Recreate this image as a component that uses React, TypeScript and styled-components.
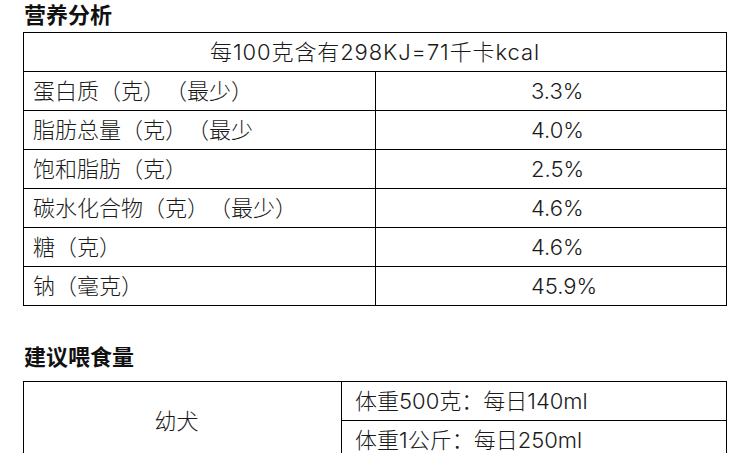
import React from "react";
import styled, { createGlobalStyle } from "styled-components";

const Global = createGlobalStyle`
  html, body { margin: 0; padding: 0; background: #fff; }
  body {
    font-family: "Noto Sans CJK SC", "Noto Sans", sans-serif;
    text-spacing-trim: space-all;
  }
`;

const Page = styled.div`
  padding: 1px 24px 0 23px;
  width: 704px;
`;

const Heading = styled.h2<{ $top?: number }>`
  margin: ${(p) => p.$top ?? 0}px 0 0 1px;
  font-size: 22px;
  line-height: 24px;
  font-weight: 700;
  color: #111;
  text-spacing-trim: space-all;
`;

const Table = styled.table<{ $top: number }>`
  margin-top: ${(p) => p.$top}px;
  width: 704px;
  border-collapse: collapse;
  table-layout: fixed;
  font-family: "Inter", "Noto Sans CJK SC", sans-serif;
  font-weight: 300;
  font-size: 22px;
  color: #1a1a1a;
  text-spacing-trim: space-all;
`;

const Td = styled.td<{
  $align?: "left" | "center";
  $pad?: number;
  $padRight?: number;
  $spacing?: number;
}>`
  border: 1px solid #000;
  height: 38px;
  padding: 0 ${(p) => p.$padRight ?? 0}px 0 ${(p) => p.$pad ?? 0}px;
  text-align: ${(p) => p.$align ?? "left"};
  letter-spacing: ${(p) => p.$spacing ?? 0}px;
  line-height: 38px;
  white-space: nowrap;
  overflow: hidden;
  text-spacing-trim: space-all;
`;

const nutrients: [string, string][] = [
  ["蛋白质（克）（最少）", "3.3%"],
  ["脂肪总量（克）（最少", "4.0%"],
  ["饱和脂肪（克）", "2.5%"],
  ["碳水化合物（克）（最少）", "4.6%"],
  ["糖（克）", "4.6%"],
  ["钠（毫克）", "45.9%"],
];

export default function App() {
  return (
    <Page>
      <Global />
      <Heading>营养分析</Heading>
      <Table $top={7}>
        <colgroup>
          <col style={{ width: 352 }} />
          <col />
        </colgroup>
        <tbody>
          <tr>
            <Td colSpan={2} $align="center" $spacing={0.9}>
              每100克含有298KJ=71千卡kcal
            </Td>
          </tr>
          {nutrients.map(([k, v]) => (
            <tr key={k}>
              <Td $pad={9}>{k}</Td>
              <Td $pad={155}>{v}</Td>
            </tr>
          ))}
        </tbody>
      </Table>
      <Heading $top={37}>建议喂食量</Heading>
      <Table $top={14}>
        <colgroup>
          <col style={{ width: 318 }} />
          <col />
        </colgroup>
        <tbody>
          <tr>
            <Td rowSpan={2} $align="center" $padRight={12}>
              幼犬
            </Td>
            <Td $pad={13}>体重500克：每日140ml</Td>
          </tr>
          <tr>
            <Td $pad={13}>体重1公斤：每日250ml</Td>
          </tr>
        </tbody>
      </Table>
    </Page>
  );
}
